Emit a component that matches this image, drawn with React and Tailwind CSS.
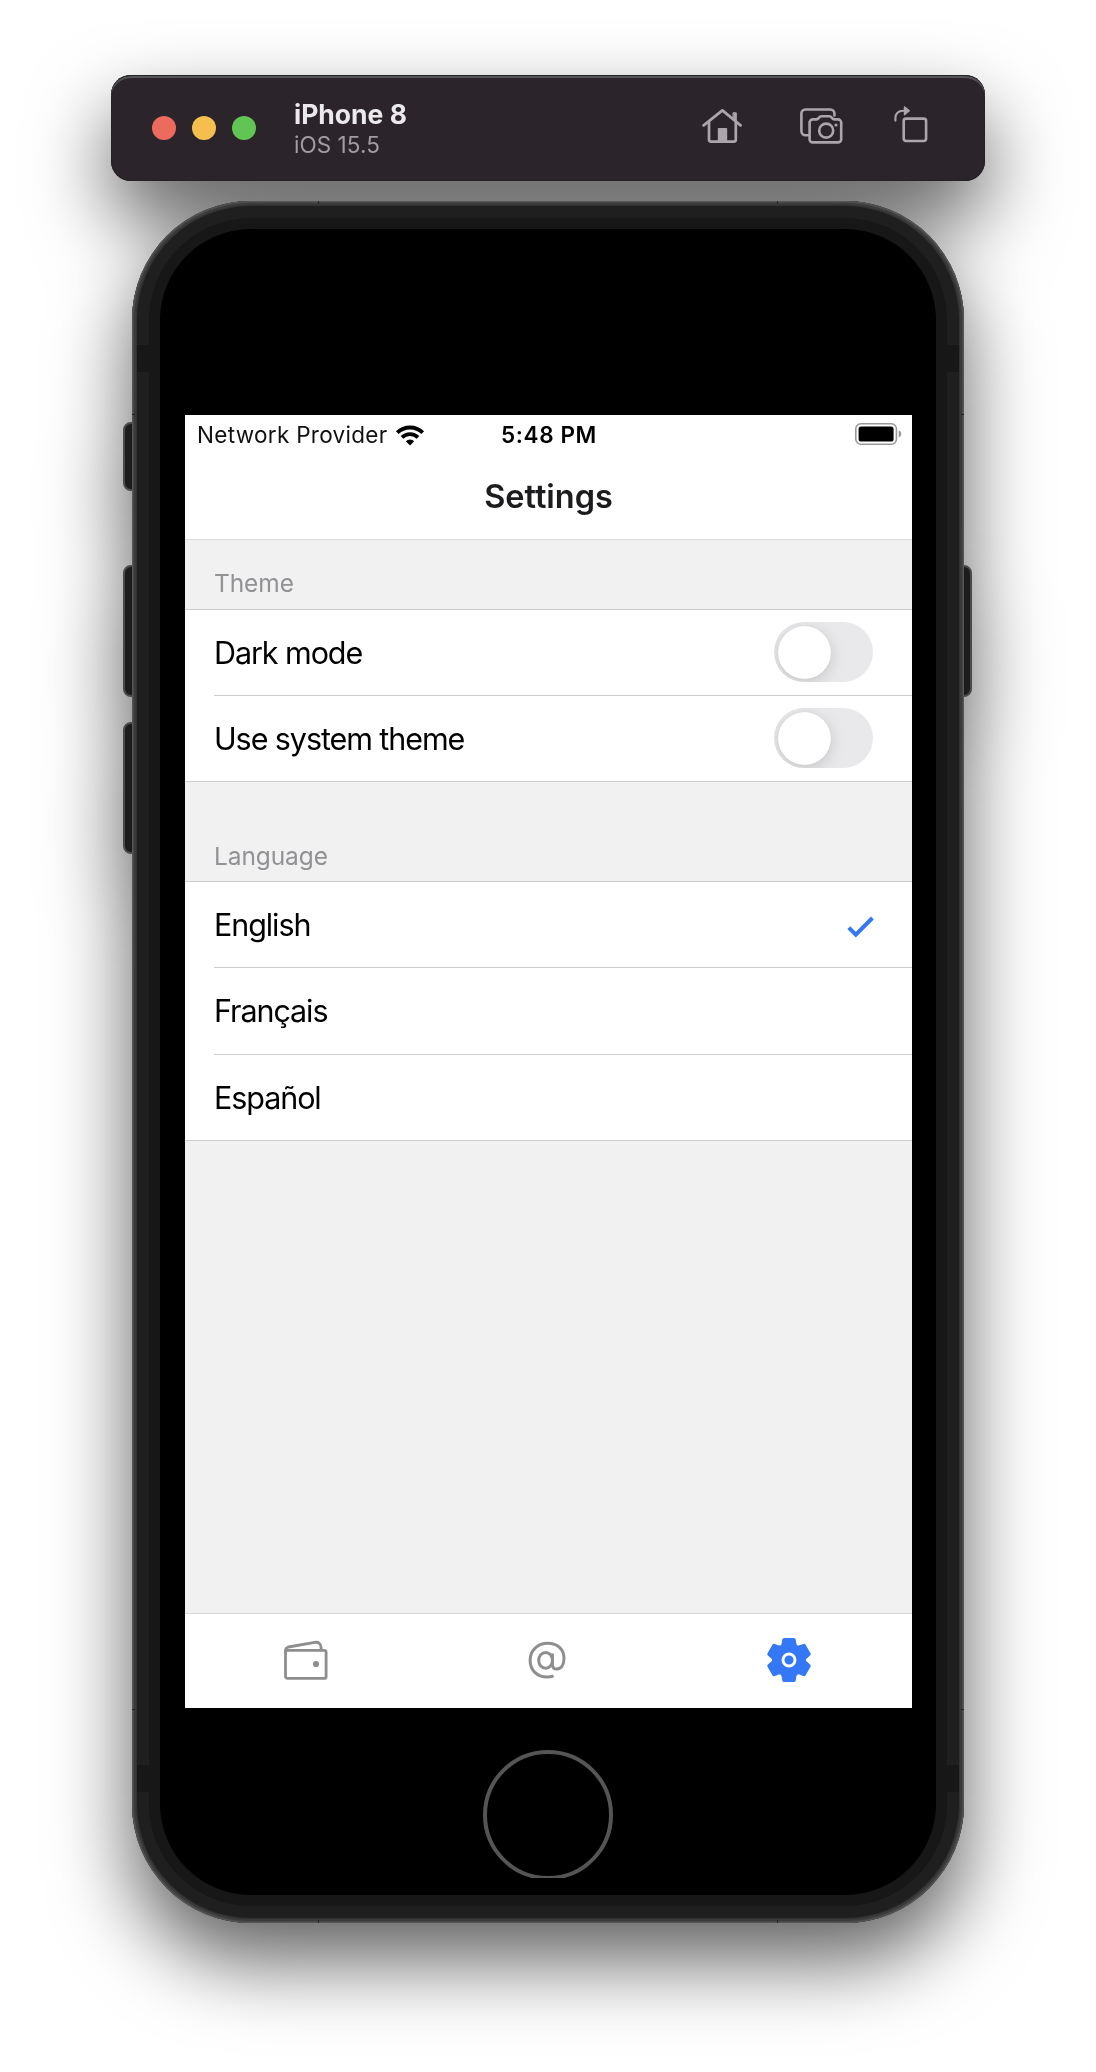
import React from "react";

const HomeIcon = () => (
  <svg className="h-[36px] w-[40px]" viewBox="0 0 40 36" fill="none" stroke="#aba5ac" strokeWidth="2.7" strokeLinecap="round" strokeLinejoin="round">
    <path d="M1.6 17.4 20.4 2.4 38.6 17.4" />
    <path d="M7 14v17.6a2 2 0 0 0 2 2h22.8a2 2 0 0 0 2-2V14" />
    <path d="M16.6 20h7.8a.8.8 0 0 1 .8.8V33h-9.4V20.8a.8.8 0 0 1 .8-.8z" fill="#aba5ac" stroke="none" />
    <path d="M31.3 4.8h3v8l-3-2.4z" fill="#aba5ac" strokeWidth="1" />
  </svg>
);

const CameraIcon = () => (
  <svg className="h-[36px] w-[44px]" viewBox="0 0 44 36" fill="none" stroke="#aba5ac" strokeWidth="2.6" strokeLinecap="round" strokeLinejoin="round">
    <path d="M8.6 27.3H5.4a4 4 0 0 1-4-4V5.5a4 4 0 0 1 4-4h25a4 4 0 0 1 4 4v2" />
    <path d="M12.8 11.4h3.4c1.2 0 2-.5 2.7-1.6.8-1.2 1.5-1.6 2.8-1.6h7.4c1.3 0 2 .4 2.8 1.6.7 1.1 1.5 1.6 2.7 1.6h3.4a3.2 3.2 0 0 1 3.2 3.2v16.600a3.2 3.2 0 0 1-3.2 3.2H12.8a3.2 3.2 0 0 1-3.2-3.2V14.600a3.2 3.2 0 0 1 3.2-3.2z" />
    <circle cx="26.2" cy="22.6" r="7" />
    <circle cx="36" cy="17" r="1.6" fill="#aba5ac" stroke="none" />
  </svg>
);

const RotateIcon = () => (
  <svg className="h-[38px] w-[34px]" viewBox="0 0 34 38" fill="none" stroke="#aba5ac" strokeWidth="2.6" strokeLinecap="round" strokeLinejoin="round">
    <path d="M1.4 15.6v-2.6C1.4 8.6 4.3 5.8 9 5.8h2" strokeWidth="2.1" />
    <path d="M10.4 1.8v8l5-4z" fill="#aba5ac" strokeWidth="1.2" />
    <rect x="9.7" y="13.6" width="22.4" height="22.4" rx="2.4" />
  </svg>
);

const WifiIcon = () => (
  <svg className="h-[22px] w-[30px]" viewBox="0 0 30 22" fill="none" stroke="#000" strokeWidth="4">
    <path d="M2.3 8.6a18.2 18.2 0 0 1 25.4 0" />
    <path d="M7 13.4a11.4 11.4 0 0 1 16 0" strokeWidth="3.7" />
    <path d="M15 21.4 10.8 17.2a6 6 0 0 1 8.4 0z" fill="#000" stroke="none" />
  </svg>
);

const BatteryIcon = () => (
  <svg className="h-[22px] w-[47px]" viewBox="0 0 47 22">
    <rect x=".8" y=".8" width="40.6" height="20.4" rx="5" fill="none" stroke="#999" strokeWidth="1.6" />
    <rect x="3.6" y="3.6" width="35" height="15" rx="2.6" fill="#000" />
    <path d="M43.7 7.6c1.7.6 2.6 1.9 2.6 3.4s-.9 2.8-2.6 3.4z" fill="#999" />
  </svg>
);

const WalletIcon = () => (
  <svg className="h-[40px] w-[44px]" viewBox="0 0 44 40" fill="none" stroke="#8e8e8e" strokeWidth="2.8" strokeLinejoin="round">
    <rect x="1.5" y="10.4" width="40.6" height="28" rx="2" />
    <path d="M1.6 13V10.5c0-1.900.9-3 2.800-3.500L30.800 2.400c3.800-.7 6 1.400 6.300 5.200l.1 2.700" />
    <circle cx="32" cy="24" r="3.1" fill="#8e8e8e" stroke="none" />
  </svg>
);

const AtIcon = () => (
  <svg className="h-[38px] w-[38px]" viewBox="0 0 38 38" fill="none" stroke="#8e8e8e" strokeWidth="3">
    <path d="M25.6 34.8c-1.9.8-4 1.2-6.5 1.2C9 36 2.1 29.2 2.1 19.3 2.1 9.4 9.6 2.3 19.8 2.3c9.6 0 16.2 6 16.2 15.3 0 6.3-2.8 10.4-7.2 10.4-2.9 0-4.4-1.7-4.4-4.6V12.4" />
    <ellipse cx="17.6" cy="19.4" rx="6.9" ry="7.9" />
  </svg>
);

const GearIcon = () => (
  <svg className="h-[46px] w-[46px]" viewBox="-23 -23 46 46" fill="#3478f6">
    <circle r="16.8" />
    {[0, 60, 120, 180, 240, 300].map((a) => (
      <path key={a} transform={`rotate(${a})`} d="M-9 -13.2C-7.6 -15 -7.3 -16.6 -7.1 -18L-6.7 -20.4Q-6.4 -22 -4.9 -22H4.9Q6.4 -22 6.7 -20.4L7.1 -18C7.3 -16.6 7.6 -15 9 -13.2Z" />
    ))}
    <circle r="6" fill="#3478f6" stroke="#fff" strokeWidth="2.9" />
  </svg>
);

const CheckIcon = () => (
  <svg className="-mr-px mt-[5px] h-[24px] w-[28px]" viewBox="0 0 28 24" fill="none" stroke="#3478f6" strokeWidth="4">
    <path d="M2.8 12.6 9.8 19.6 26.4 3" />
  </svg>
);

const Toggle = () => (
  <span className="-mt-px flex h-[60px] w-[99px] items-center overflow-hidden rounded-full bg-[#e9e9eb] pl-1">
    <span className="size-[53px] rounded-full bg-white shadow-[0_0_1px_rgba(0,0,0,0.15),0_4px_16px_rgba(0,0,0,0.15)]" />
  </span>
);

const Row = ({ label, last, height, children }) => (
  <div className={`flex bg-white pl-[29px] ${height}`}>
    <div className={`flex flex-1 items-center justify-between pr-[39px] ${last ? "" : "border-b border-[#cdcdcf]"}`}>
      <span className="text-[30.5px] leading-[36px] tracking-[-1.08px] text-black">{label}</span>
      {children}
    </div>
  </div>
);

const SectionTitle = ({ children, className }) => (
  <h2 className={`pl-[29px] text-[24.5px] leading-[30px] tracking-[-0.1px] text-[#929296] ${className}`}>{children}</h2>
);

const SideButton = ({ className }) => <div className={`absolute border-2 border-[#4a4a4a] bg-[#1c1c1c] ${className}`} />;

export default function App() {
  return (
    <div className="h-[2072px] w-[1096px] overflow-hidden bg-white pt-[75px] font-['Inter','Noto_Sans',sans-serif]">
      <div className="flex flex-col items-center gap-5 drop-shadow-[0_38px_40px_rgba(0,0,0,0.62)]">
        <header className="flex h-[106px] w-[874px] items-center rounded-[20px] bg-[#2b252b] pl-[41px] pr-[57px] shadow-[inset_0_1px_0_#1f2620,inset_0_3px_0_#57535a,inset_0_0_0_1px_#222]">
          <div className="flex gap-4">
            <span className="size-6 rounded-full bg-[#ed6a5e]" />
            <span className="size-6 rounded-full bg-[#f5bf4f]" />
            <span className="size-6 rounded-full bg-[#61c554]" />
          </div>
          <div className="ml-[38px] flex-1 pt-[3px]">
            <div className="text-[26.5px] font-bold leading-[30px] tracking-[0px] text-[#ebe9eb]">iPhone 8</div>
            <div className="mt-px text-[22.5px] leading-[30px] tracking-[0.05px] text-[#a29ca3]">iOS 15.5</div>
          </div>
          <div className="flex items-center pb-[4px]">
            <HomeIcon />
            <div className="ml-[58px]"><CameraIcon /></div>
            <div className="mb-[5px] ml-[50px]"><RotateIcon /></div>
          </div>
        </header>

        <div className="relative h-[1722px] w-[832px]">
          <SideButton className="-left-[9px] top-[221px] h-[69px] w-5 rounded-l-[8px]" />
          <SideButton className="-left-[9px] top-[364px] h-[132px] w-5 rounded-l-[8px]" />
          <SideButton className="-left-[9px] top-[521px] h-[132px] w-5 rounded-l-[8px]" />
          <SideButton className="-right-[8px] top-[364px] h-[132px] w-5 rounded-r-[8px]" />

          <div className="relative h-full rounded-[119px] bg-[#303030] p-[5px] shadow-[inset_0_0_0_1px_#555,inset_0_0_0_2px_#484848,inset_0_0_0_4px_#3a3a3a]">
            <div className="h-full rounded-[114px] bg-[#1f1f1f] p-[12px]">
              <div className="h-full rounded-[102px] bg-[#171717] p-[11px]">
                <div className="flex h-full flex-col items-center rounded-[91px] bg-black pt-[186px]">
                  <div className="ml-[25px] flex h-[1293px] w-[727px] flex-col self-start bg-[#f1f1f1]">
                    <div className="h-[125px] border-b border-[#dcdcde] bg-white">
                      <div className="grid h-[40px] grid-cols-3 items-center pl-[12px] pr-[10px]">
                        <div className="flex items-center gap-[7px]">
                          <span className="whitespace-nowrap text-[22.5px] leading-[28px] tracking-[0.3px] text-[#111]">Network Provider</span>
                          <WifiIcon />
                        </div>
                        <div className="pr-px text-center text-[22.5px] font-semibold leading-[28px] tracking-[0.6px] text-black">5:48 PM</div>
                        <div className="flex -translate-y-px justify-end"><BatteryIcon /></div>
                      </div>
                      <h1 className="mt-[22px] text-center text-[32.5px] font-semibold leading-[40px] tracking-[-0.05px] text-[#1c1c1e]">Settings</h1>
                    </div>

                    <SectionTitle className="h-[69px] pt-[28px]">Theme</SectionTitle>
                    <div className="border-y border-[#cdcdcf]">
                      <Row label="Dark mode" height="h-[86px]"><Toggle /></Row>
                      <Row label="Use system theme" height="h-[85px]" last><Toggle /></Row>
                    </div>
                    <SectionTitle className="h-[99px] pt-[59px]">Language</SectionTitle>
                    <div className="border-y border-[#cdcdcf]">
                      <Row label="English" height="h-[86px]"><CheckIcon /></Row>
                      <Row label="Français" height="h-[87px]" />
                      <Row label="Español" height="h-[85px]" last />
                    </div>

                    <nav className="mt-auto grid h-[95px] grid-cols-3 items-center border-t border-[#d6d6d8] bg-white pb-[2px] pr-[2px]">
                      <div className="flex justify-center"><WalletIcon /></div>
                      <div className="flex justify-center"><AtIcon /></div>
                      <div className="flex justify-center"><GearIcon /></div>
                    </nav>
                  </div>
                  <div className="mt-[42px] h-[128px] overflow-hidden">
                    <div className="size-[130px] rounded-full border-4 border-[#555]" />
                  </div>
                </div>
              </div>
            </div>
          </div>

          <div className="absolute left-[5px] top-[144px] h-[27px] w-[12px] bg-[#171717]" />
          <div className="absolute right-[5px] top-[144px] h-[27px] w-[12px] bg-[#171717]" />
          <div className="absolute bottom-[131px] left-[5px] h-[27px] w-[12px] bg-[#171717]" />
          <div className="absolute bottom-[131px] right-[5px] h-[27px] w-[12px] bg-[#171717]" />
          <div className="absolute left-[186px] top-0 h-[3px] w-px bg-[#222]" />
          <div className="absolute right-[186px] top-0 h-[3px] w-px bg-[#222]" />
          <div className="absolute bottom-0 left-[186px] h-[3px] w-px bg-[#222]" />
          <div className="absolute bottom-0 right-[186px] h-[3px] w-px bg-[#222]" />
          <div className="absolute left-0 top-[213px] h-px w-[3px] bg-[#222]" />
          <div className="absolute right-0 top-[213px] h-px w-[3px] bg-[#222]" />
          <div className="absolute bottom-[213px] left-0 h-px w-[3px] bg-[#222]" />
          <div className="absolute bottom-[213px] right-0 h-px w-[3px] bg-[#222]" />
        </div>
      </div>
    </div>
  );
}
